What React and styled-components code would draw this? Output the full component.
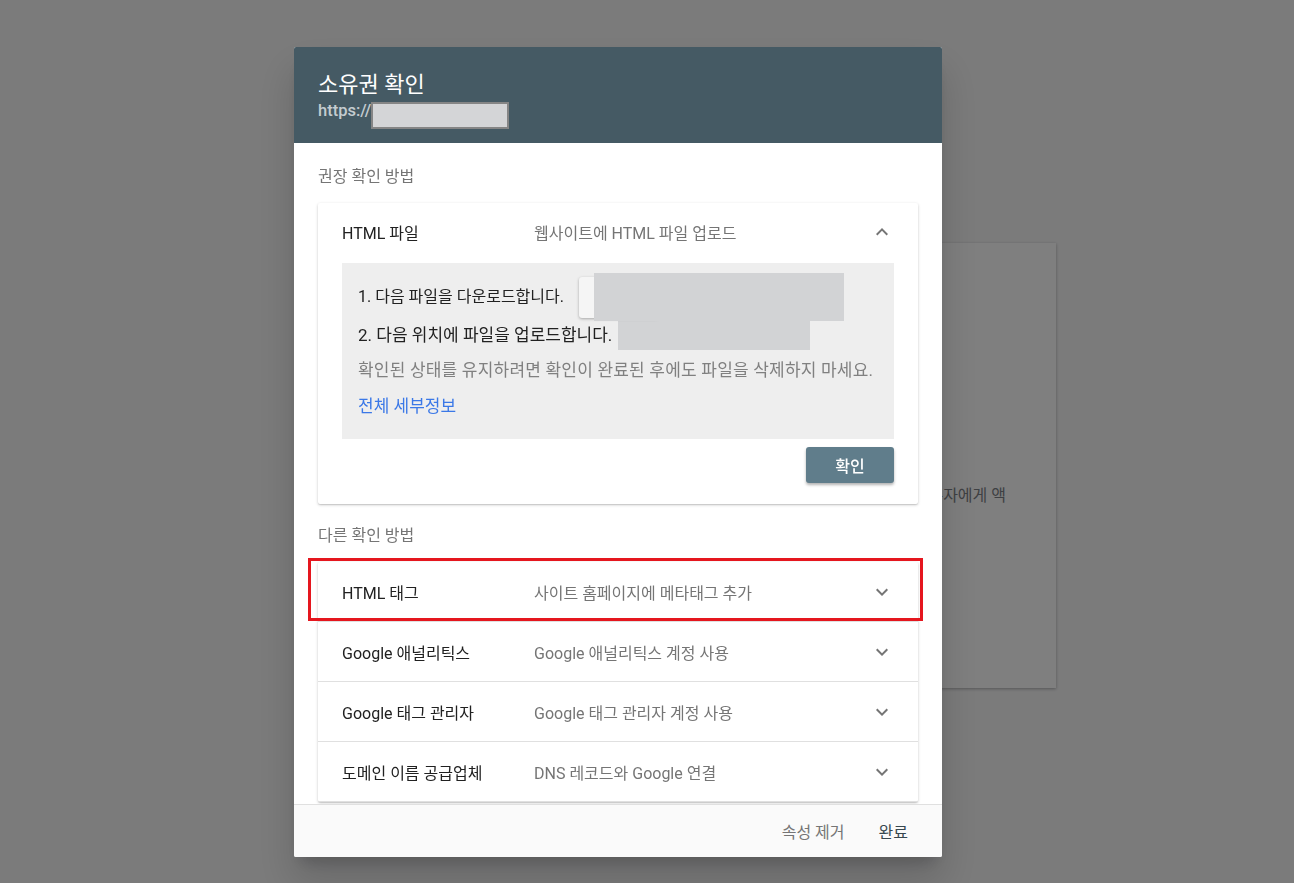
import React from "react";
import styled, { createGlobalStyle } from "styled-components";

const GlobalStyle = createGlobalStyle`
  html, body {
    margin: 0;
    padding: 0;
    background: #f6f6f7;
    font-family: Roboto, "Noto Sans CJK KR", sans-serif;
  }
  * { box-sizing: border-box; }
`;

const Page = styled.div`
  height: 883px;
  padding: 243px 0 0 620px;
  overflow: hidden;
`;

const BackCard = styled.div`
  width: 436px;
  height: 445px;
  background: #fff;
  box-shadow: 0 1px 3px rgba(0, 0, 0, 0.3);
  padding: 243px 50px 0 24px;
`;

const BackText = styled.p`
  margin: 0;
  font-size: 16px;
  line-height: 20px;
  color: #7d8186;
  text-align: right;
  white-space: nowrap;
  overflow: hidden;
`;

const Overlay = styled.div`
  position: fixed;
  inset: 0;
  background: rgba(0, 0, 0, 0.5);
  padding: 47px 0 0 294px;
`;

const Dialog = styled.div`
  width: 648px;
  height: 810px;
  display: flex;
  flex-direction: column;
  background: #fff;
  border-radius: 2px;
  overflow: hidden;
  box-shadow: 0 11px 15px -7px rgba(0, 0, 0, 0.2), 0 24px 38px 3px rgba(0, 0, 0, 0.14);
`;

const Header = styled.div`
  height: 96px;
  flex: none;
  background: #455a64;
  padding: 23px 24px 0;
`;

const Title = styled.h1`
  margin: 0;
  font-size: 22px;
  line-height: 30px;
  font-weight: 400;
  color: #fff;
`;

const Url = styled.div`
  display: flex;
  align-items: flex-start;
  margin-top: 1px;
  font-size: 16.5px;
  line-height: 20px;
  font-weight: 500;
  color: #c4ccd0;
`;

const UrlRedaction = styled.span`
  display: inline-block;
  width: 138px;
  height: 27px;
  margin-top: 1px;
  background: #d4d5d7;
  border: 2px solid #858585;
`;

const Body = styled.div`
  flex: 1;
  overflow: hidden;
  padding: 24px 24px 0;
`;

const SectionLabel = styled.div`
  font-size: 16px;
  line-height: 20px;
  color: #757575;
  margin: ${(p) => p.$top || 0}px 0 16px;
`;

const Card = styled.div`
  background: #fff;
  box-shadow: 0 1px 3px rgba(0, 0, 0, 0.22), 0 1px 1px rgba(0, 0, 0, 0.08);
  border-radius: 2px;
  padding-bottom: ${(p) => p.$bottom || 0}px;
`;

const Row = styled.div`
  position: relative;
  height: 60px;
  display: flex;
  align-items: center;
  padding: 0 24px ${(p) => (p.$lift ? 3 : 0)}px;
  font-size: 16px;
  border-bottom: ${(p) => (p.$divider ? "1px solid #e0e0e0" : "none")};

  ${(p) =>
    p.$marked &&
    `
    &::after {
      content: "";
      position: absolute;
      top: -4px;
      left: -10px;
      right: -5px;
      bottom: 0;
      border: 3px solid #e5161e;
      pointer-events: none;
    }
  `}
`;

const Method = styled.span`
  width: 192px;
  flex: none;
  color: #212121;
`;

const Desc = styled.span`
  flex: 1;
  color: #757575;
`;

const Chevron = styled.svg`
  width: 24px;
  height: 24px;
  fill: #757575;
  flex: none;
`;

const Steps = styled.div`
  margin: 0 24px;
  background: #eeeeee;
  padding: 12px 16px 21px;
  font-size: 17px;
  color: #212121;
`;

const StepLine = styled.div`
  display: flex;
  align-items: center;
  height: ${(p) => p.$h}px;
  font-size: ${(p) => p.$size || 17}px;
`;

const DownloadButton = styled.span`
  position: relative;
  display: inline-block;
  width: 80px;
  height: 41px;
  margin: 4px 0 0 15px;
  background: #f5f5f5;
  border-radius: 3px;
  box-shadow: 0 1px 3px rgba(0, 0, 0, 0.3);
`;

const ButtonRedaction = styled.span`
  position: absolute;
  left: 15px;
  top: -4px;
  width: 250px;
  height: 48px;
  background: #d2d3d5;
`;

const PathRedaction = styled.span`
  align-self: flex-end;
  display: inline-block;
  width: 192px;
  height: 30px;
  margin: 0 0 1px 6px;
  background: #d2d3d5;
`;

const Note = styled.div`
  margin-top: 7px;
  line-height: 24px;
  letter-spacing: 0.2px;
  color: #808080;
`;

const Link = styled.a`
  display: block;
  margin-top: 12px;
  line-height: 24px;
  color: #3b78e7;
  text-decoration: none;
`;

const Actions = styled.div`
  display: flex;
  justify-content: flex-end;
  padding: 8px 24px 0;
`;

const VerifyButton = styled.button`
  width: 88px;
  height: 36px;
  border: none;
  border-radius: 3px;
  background: #607d8b;
  color: #fff;
  font-family: inherit;
  font-size: 16px;
  font-weight: 500;
  box-shadow: 0 2px 3px rgba(0, 0, 0, 0.3);
`;

const Footer = styled.div`
  height: 53px;
  flex: none;
  background: #fafafa;
  border-top: 1px solid #e0e0e0;
  display: flex;
  align-items: center;
  justify-content: flex-end;
  padding-right: 18px;
  gap: 2px;
`;

const FooterButton = styled.button`
  border: none;
  background: none;
  padding: 8px 16px;
  font-family: inherit;
  font-size: 16px;
  color: ${(p) => (p.$primary ? "#37474f" : "#757575")};
`;

const ExpandMore = () => (
  <Chevron viewBox="0 0 24 24">
    <path d="M16.59 8.59L12 13.17 7.41 8.59 6 10l6 6 6-6z" />
  </Chevron>
);

const ExpandLess = () => (
  <Chevron viewBox="0 0 24 24">
    <path d="M12 8l-6 6 1.41 1.41L12 10.83l4.59 4.58L18 14z" />
  </Chevron>
);

const otherMethods = [
  ["HTML 태그", "사이트 홈페이지에 메타태그 추가"],
  ["Google 애널리틱스", "Google 애널리틱스 계정 사용"],
  ["Google 태그 관리자", "Google 태그 관리자 계정 사용"],
  ["도메인 이름 공급업체", "DNS 레코드와 Google 연결"],
];

export default function App() {
  return (
    <>
      <GlobalStyle />
      <Page>
        <BackCard>
          <BackText>이 속성의 소유자에게 액</BackText>
        </BackCard>
      </Page>
      <Overlay>
        <Dialog>
          <Header>
            <Title>소유권 확인</Title>
            <Url>
              https://
              <UrlRedaction />
            </Url>
          </Header>
          <Body>
            <SectionLabel>권장 확인 방법</SectionLabel>
            <Card $bottom={21}>
              <Row $lift>
                <Method>HTML 파일</Method>
                <Desc>웹사이트에 HTML 파일 업로드</Desc>
                <ExpandLess />
              </Row>
              <Steps>
                <StepLine $h={40} $size={16}>
                  1. 다음 파일을 다운로드합니다.
                  <DownloadButton>
                    <ButtonRedaction />
                  </DownloadButton>
                </StepLine>
                <StepLine $h={36}>
                  2. 다음 위치에 파일을 업로드합니다.
                  <PathRedaction />
                </StepLine>
                <Note>확인된 상태를 유지하려면 확인이 완료된 후에도 파일을 삭제하지 마세요.</Note>
                <Link href="#">전체 세부정보</Link>
              </Steps>
              <Actions>
                <VerifyButton>확인</VerifyButton>
              </Actions>
            </Card>
            <SectionLabel $top={22}>다른 확인 방법</SectionLabel>
            <Card>
              {otherMethods.map(([name, desc], i) => (
                <Row key={name} $divider $marked={i === 0}>
                  <Method>{name}</Method>
                  <Desc>{desc}</Desc>
                  <ExpandMore />
                </Row>
              ))}
            </Card>
          </Body>
          <Footer>
            <FooterButton>속성 제거</FooterButton>
            <FooterButton $primary>완료</FooterButton>
          </Footer>
        </Dialog>
      </Overlay>
    </>
  );
}
